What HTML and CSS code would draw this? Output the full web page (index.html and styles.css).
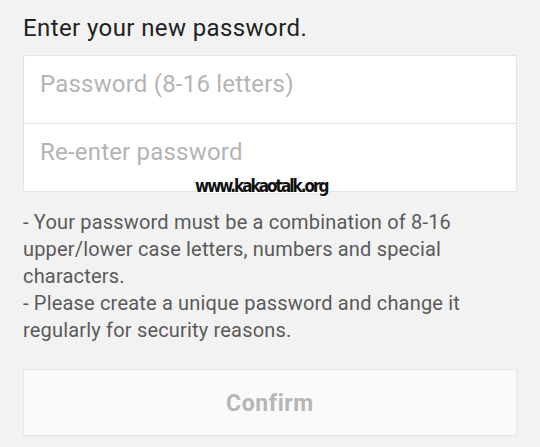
FILE: index.html
```html
<!DOCTYPE html>
<html lang="en">
<head>
  <meta charset="UTF-8">
  <title>Enter your new password</title>
  <link rel="stylesheet" href="styles.css">
</head>
<body>
  <div class="page">
    <h2 class="title">Enter your new password.</h2>

    <div class="fields">
      <input type="password" class="field" placeholder="Password (8-16 letters)">
      <input type="password" class="field" placeholder="Re-enter password">
    </div>

    <div class="notes">
      <p>- Your password must be a combination of 8-16 upper/lower case letters, numbers and special characters.</p>
      <p>- Please create a unique password and change it regularly for security reasons.</p>
    </div>

    <button class="btn-confirm" disabled>Confirm</button>

    <span class="watermark">www.kakaotalk.org</span>
  </div>
</body>
</html>
```

FILE: styles.css
```css
body {
  margin: 0;
  padding: 0;
  background-color: #f2f2f2;
  font-family: Roboto, "Noto Sans", sans-serif;
}

.page {
  position: relative;
  padding: 13px 23px 0 23px;
}

.title {
  margin: 0 0 12px 0;
  font-size: 24px;
  line-height: 30px;
  letter-spacing: 0.4px;
  font-weight: normal;
  color: #222;
}

.fields {
  display: flex;
  flex-direction: column;
  background: white;
  border: 1px solid #e4e4e4;
  border-radius: 2px;
}

.field {
  height: 67px;
  margin: 0;
  padding: 0 0 11px 16px;
  border: none;
  background: transparent;
  font-family: Roboto, sans-serif;
  font-size: 24px;
  letter-spacing: 0.2px;
  color: #333;
  outline: none;
  box-sizing: border-box;
}

.field + .field {
  border-top: 1px solid #e4e4e4;
  height: 68px;
}

.field::placeholder {
  color: #b4b4b4;
}

.notes {
  margin-top: 17px;
  font-size: 20px;
  line-height: 27px;
  letter-spacing: 0.18px;
  color: #5a5a5a;
}

.notes p {
  margin: 0;
}

.btn-confirm {
  display: block;
  width: 100%;
  height: 67px;
  margin-top: 25px;
  padding-top: 3px;
  background: #fafafa;
  border: 1px solid #e6e6e6;
  border-radius: 2px;
  font-family: Roboto, sans-serif;
  font-size: 23px;
  letter-spacing: 0.6px;
  font-weight: bold;
  color: #b6b6b6;
}

/* watermark stamped over the picture */
.watermark {
  position: absolute;
  left: 195px;
  top: 176px;
  font-family: "DejaVu Sans Condensed", "DejaVu Sans", sans-serif;
  font-stretch: condensed;
  font-weight: bold;
  font-size: 17px;
  letter-spacing: -2px;
  color: #111;
  text-shadow: 1px 0 0 #fff, -1px 0 0 #fff, 0 1px 0 #fff, 0 -1px 0 #fff,
    1px 1px 0 #fff, -1px -1px 0 #fff, 1px -1px 0 #fff, -1px 1px 0 #fff,
    0 0 2px #444;
}
```
